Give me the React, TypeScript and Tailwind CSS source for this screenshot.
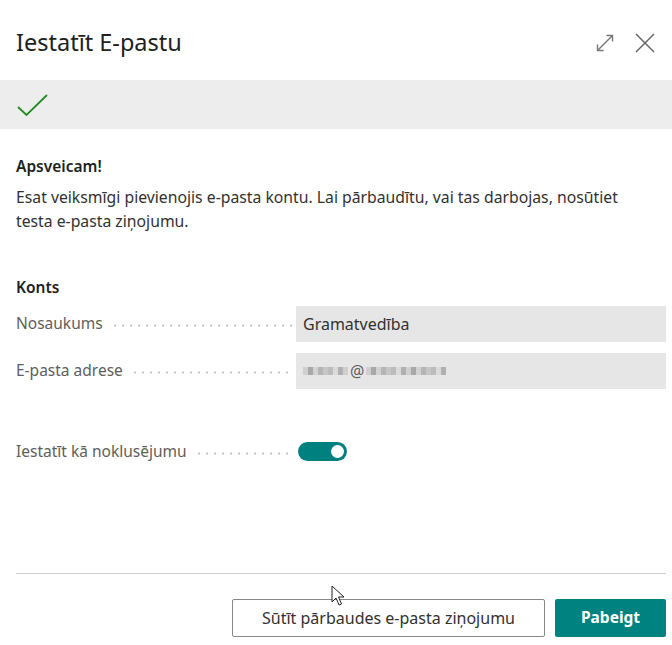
import React from 'react';

const font = { fontFamily: '"Noto Sans", "Open Sans", Arial, sans-serif' };

function Field({ label, children }: { label: string; children: React.ReactNode }) {
  return (
    <div className="flex items-center">
      <div className="flex w-[280px] shrink-0 items-center">
        <span className="text-[15.5px] text-[#605e5c] whitespace-nowrap">{label}</span>
        <span className="ml-[8px] mr-[4px] mt-[4px] h-[3px] flex-1 bg-[radial-gradient(circle,#c4c4c4_0.9px,transparent_1.3px)] bg-[length:8px_3px] bg-repeat-x" />
      </div>
      {children}
    </div>
  );
}

function Blur({ w }: { w: number }) {
  // pixelated blurred e-mail address
  const shades = ['bg-[#cfcfcf]', 'bg-[#b5b5b5]', 'bg-[#dadada]', 'bg-[#a8a8a8]', 'bg-[#c6c6c6]', 'bg-[#b0b0b0]', 'bg-[#d2d2d2]', 'bg-[#bcbcbc]'];
  return (
    <span className="flex items-center">
      {Array.from({ length: w }).map((_, i) => (
        <span key={i} className={`inline-block h-[8px] w-[5px] ${shades[(i * 3) % shades.length]}`} />
      ))}
    </span>
  );
}

export default function App() {
  return (
    <div className="relative flex h-[645px] w-[672px] flex-col bg-white text-[#323130]" style={font}>
      {/* Header */}
      <div className="flex h-[80px] items-center justify-between pl-4 pr-4 pt-[6px]">
        <h1 className="text-[23.5px] text-[#201f1e]">Iestatīt E-pastu</h1>
        <div className="flex items-center gap-[21px] pr-[1px]">
          <svg width="18" height="18" viewBox="0 0 18 18" fill="none" stroke="#777" strokeWidth="1.4">
            <path d="M1.5 16.5 L16.5 1.5" />
            <path d="M1.5 10.5 V16.5 H7.5" />
            <path d="M10.5 1.5 H16.5 V7.5" />
          </svg>
          <svg width="20" height="20" viewBox="0 0 20 20" fill="none" stroke="#666" strokeWidth="1.5">
            <path d="M1 1 L19 19 M19 1 L1 19" />
          </svg>
        </div>
      </div>

      {/* Success band */}
      <div className="flex h-[49px] items-center bg-[#ededed] pl-[17px]">
        <svg width="31" height="22" viewBox="0 0 31 22" fill="none" stroke="#228b22" strokeWidth="1.8">
          <path d="M1 13 L9.5 21 L30 1" />
        </svg>
      </div>

      {/* Body */}
      <div className="flex flex-1 flex-col pl-4 pr-[6px]">
        <p className="mt-[26px] text-[15.5px] font-semibold text-[#201f1e]">Apsveicam!</p>
        <p className="mt-[7px] w-[640px] text-[15.75px] leading-[24px] text-[#323130]">
          Esat veiksmīgi pievienojis e-pasta kontu. Lai pārbaudītu, vai tas darbojas, nosūtiet testa e-pasta ziņojumu.
        </p>

        <p className="mt-[43px] text-[15.5px] font-semibold text-[#201f1e]">Konts</p>

        <div className="mt-[6px] flex flex-col gap-[11px]">
          <Field label="Nosaukums">
            <div className="flex h-[36px] flex-1 items-center bg-[#e6e6e6] px-[7px] text-[16px] text-[#323130]">
              Gramatvedība
            </div>
          </Field>
          <Field label="E-pasta adrese">
            <div className="flex h-[36px] flex-1 items-center gap-[1px] bg-[#e6e6e6] px-[7px] text-[16px] text-[#606060]">
              <Blur w={9} />
              <span className="px-[1px]">@</span>
              <Blur w={16} />
            </div>
          </Field>
        </div>

        <div className="mt-[51px]">
          <Field label="Iestatīt kā noklusējumu">
            <div className="ml-[2px] flex h-[19px] w-[49px] items-center justify-end rounded-full bg-[#00807f] pr-[3px]">
              <span className="h-[13px] w-[13px] rounded-full bg-white" />
            </div>
          </Field>
        </div>

        <div className="mt-auto border-t border-[#d2d0ce]" />
        <div className="flex justify-end gap-[10px] pb-[8px] pt-[25px]">
          <button className="h-[38px] w-[313px] rounded-[2px] border border-[#8a8886] bg-white text-[16px] text-[#323130]">
            Sūtīt pārbaudes e-pasta ziņojumu
          </button>
          <button className="h-[38px] w-[111px] rounded-[2px] bg-[#008380] text-[15.5px] font-bold text-white">
            Pabeigt
          </button>
        </div>
      </div>

      {/* mouse cursor */}
      <svg className="absolute left-[331px] top-[585px]" width="14" height="22" viewBox="0 0 14 22">
        <path d="M1 1 L1 17 L5 13 L8 20 L10.5 19 L7.5 12 L13 12 Z" fill="white" stroke="#222" strokeWidth="1" strokeLinejoin="round" />
      </svg>
    </div>
  );
}
